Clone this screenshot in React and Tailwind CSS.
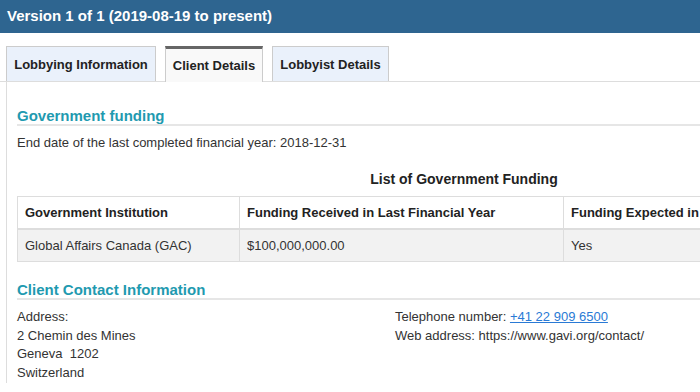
export default function App() {
  const tabs = [
    { label: 'Lobbying Information', w: 'w-[150px]' },
    { label: 'Client Details', w: 'w-[98px]', active: true },
    { label: 'Lobbyist Details', w: 'w-[117px]' },
  ]

  return (
    <div className="w-[700px] h-[392px] overflow-hidden bg-white text-[#333] font-['Liberation_Sans',Arial,sans-serif]">
      <div className="h-[33px] bg-[#2e6590] flex items-center px-[7px]">
        <h2 className="text-white font-bold text-[15px]">Version 1 of 1 (2019-08-19 to present)</h2>
      </div>

      <div className="mt-[13px] pl-[6px] flex gap-[9px] border-b border-[#ddd] h-[36px]">
        {tabs.map((t) =>
          t.active ? (
            <div
              key={t.label}
              className={`${t.w} h-[36px] bg-[#f9f9f9] border-x border-[#ccc] border-t-[3px] border-t-[#666] flex items-center justify-center text-[13px] font-bold text-[#222]`}
            >
              {t.label}
            </div>
          ) : (
            <div
              key={t.label}
              className={`${t.w} h-[35px] bg-[#eaf1fb] border border-b-0 border-[#ccc] flex items-center justify-center text-[13px] font-bold text-[#222] pt-[2px]`}
            >
              {t.label}
            </div>
          )
        )}
      </div>

      <div className="ml-[6px] border-l border-[#ddd] pl-[10px] pt-[25px] w-[1000px]">
        <h3 className="text-[15px] font-bold text-[#1f9ab0] leading-[17px] border-b-2 border-[#e6e6e6]">
          Government funding
        </h3>
        <p className="text-[13px] mt-[8px] leading-[18px]">End date of the last completed financial year: 2018-12-31</p>

        <div className="w-[894px] mt-[18px]">
          <div className="text-center font-bold text-[14px] leading-[18px] text-[#222]">List of Government Funding</div>
          <table className="w-full mt-[8px] border-collapse text-[13px]">
            <thead>
              <tr className="h-[32px]">
                <th className="w-[222px] border border-[#ddd] text-left font-bold px-[7px] text-[#222]">Government Institution</th>
                <th className="w-[324px] border border-[#ddd] text-left font-bold px-[7px] text-[#222]">Funding Received in Last Financial Year</th>
                <th className="border border-[#ddd] text-left font-bold px-[7px] text-[#222]">Funding Expected in Current Financial Year</th>
              </tr>
            </thead>
            <tbody>
              <tr className="h-[33px] bg-[#f2f2f2]">
                <td className="border border-[#ddd] border-t-2 px-[7px]">Global Affairs Canada (GAC)</td>
                <td className="border border-[#ddd] border-t-2 px-[7px]">$100,000,000.00</td>
                <td className="border border-[#ddd] border-t-2 px-[7px]">Yes</td>
              </tr>
            </tbody>
          </table>
        </div>

        <h3 className="mt-[19px] text-[15px] font-bold text-[#1f9ab0] leading-[17px] border-b-2 border-[#e6e6e6]">
          Client Contact Information
        </h3>
        <div className="flex mt-[8px] text-[13px] leading-[18.7px]">
          <div className="w-[378px]">
            <div>Address:</div>
            <div>2 Chemin des Mines</div>
            <div className="whitespace-pre">Geneva  1202</div>
            <div>Switzerland</div>
          </div>
          <div>
            <div>
              Telephone number:{' '}
              <a href="#" className="text-[#2a7ad5] underline">+41 22 909 6500</a>
            </div>
            <div>Web address: https://www.gavi.org/contact/</div>
          </div>
        </div>
      </div>
    </div>
  )
}
